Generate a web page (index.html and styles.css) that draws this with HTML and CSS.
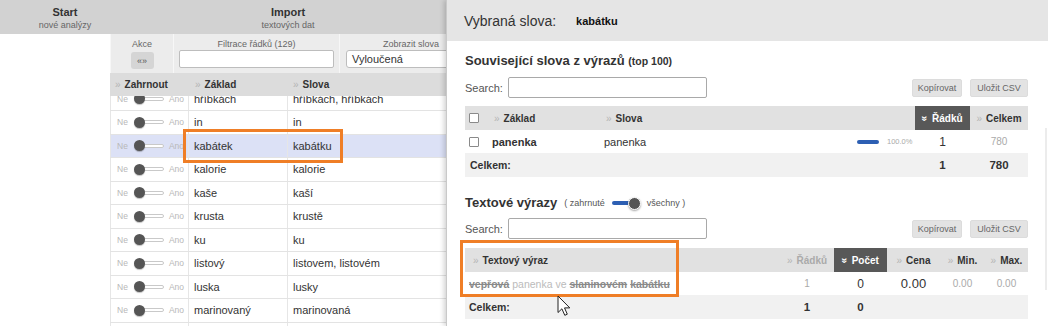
FILE: index.html
```html
<!DOCTYPE html>
<html lang="cs">
<head>
<meta charset="utf-8">
<title>Analýza slov</title>
<link rel="stylesheet" href="styles.css">
</head>
<body>
<div class="page">
  <nav class="topnav">
    <div class="nav-item nav-start"><b>Start</b><span>nové analýzy</span></div>
    <div class="nav-item nav-import"><b>Import</b><span>textových dat</span></div>
  </nav>
  <div class="main">
    <div class="gutter"></div>
    <section class="words">
      <div class="controls">
        <div class="ctl ctl-akce"><label>Akce</label><button class="btn-akce">«»</button></div>
        <div class="ctl ctl-filter"><label>Filtrace řádků (129)</label><div class="filter-input"></div></div>
        <div class="ctl ctl-show"><label>Zobrazit slova</label><div class="select">Vyloučená</div></div>
      </div>
      <div class="wt-head">
        <div class="c c-inc"><i class="ar">»</i>Zahrnout</div>
        <div class="c c-base"><i class="ar">»</i>Základ</div>
        <div class="c c-words"><i class="ar">»</i>Slova</div>
      </div>
      <div class="wt-body">
        <div class="wt-rows">
          <div class="row"><div class="c c-inc"><span class="ne">Ne</span><span class="sw"><span class="knob"></span><span class="track"></span></span><span class="ano">Ano</span></div><div class="c c-base">hříbkách</div><div class="c c-words">hříbkách, hříbkách</div></div>
          <div class="row"><div class="c c-inc"><span class="ne">Ne</span><span class="sw"><span class="knob"></span><span class="track"></span></span><span class="ano">Ano</span></div><div class="c c-base">in</div><div class="c c-words">in</div></div>
          <div class="row sel"><div class="c c-inc"><span class="ne">Ne</span><span class="sw"><span class="knob"></span><span class="track"></span></span><span class="ano">Ano</span></div><div class="c c-base">kabátek</div><div class="c c-words">kabátku</div></div>
          <div class="row"><div class="c c-inc"><span class="ne">Ne</span><span class="sw"><span class="knob"></span><span class="track"></span></span><span class="ano">Ano</span></div><div class="c c-base">kalorie</div><div class="c c-words">kalorie</div></div>
          <div class="row"><div class="c c-inc"><span class="ne">Ne</span><span class="sw"><span class="knob"></span><span class="track"></span></span><span class="ano">Ano</span></div><div class="c c-base">kaše</div><div class="c c-words">kaší</div></div>
          <div class="row"><div class="c c-inc"><span class="ne">Ne</span><span class="sw"><span class="knob"></span><span class="track"></span></span><span class="ano">Ano</span></div><div class="c c-base">krusta</div><div class="c c-words">krustě</div></div>
          <div class="row"><div class="c c-inc"><span class="ne">Ne</span><span class="sw"><span class="knob"></span><span class="track"></span></span><span class="ano">Ano</span></div><div class="c c-base">ku</div><div class="c c-words">ku</div></div>
          <div class="row"><div class="c c-inc"><span class="ne">Ne</span><span class="sw"><span class="knob"></span><span class="track"></span></span><span class="ano">Ano</span></div><div class="c c-base">listový</div><div class="c c-words">listovem, listovém</div></div>
          <div class="row"><div class="c c-inc"><span class="ne">Ne</span><span class="sw"><span class="knob"></span><span class="track"></span></span><span class="ano">Ano</span></div><div class="c c-base">luska</div><div class="c c-words">lusky</div></div>
          <div class="row"><div class="c c-inc"><span class="ne">Ne</span><span class="sw"><span class="knob"></span><span class="track"></span></span><span class="ano">Ano</span></div><div class="c c-base">marinovaný</div><div class="c c-words">marinovaná</div></div>
          <div class="row"><div class="c c-inc"><span class="ne">Ne</span><span class="sw"><span class="knob"></span><span class="track"></span></span><span class="ano">Ano</span></div><div class="c c-base">máslo</div><div class="c c-words">máslem</div></div>
        </div>
      </div>
    </section>
  </div>

  <aside class="detail">
    <div class="d-head"><span class="d-title">Vybraná slova:</span><b class="d-sel">kabátku</b></div>
    <div class="d-body">
      <h3 class="d-h">Související slova z výrazů <small>(top 100)</small></h3>
      <div class="search-row">
        <label class="s-label">Search:</label><div class="s-input"></div>
        <div class="btns"><button class="btn btn-copy">Kopírovat</button><button class="btn btn-csv">Uložit CSV</button></div>
      </div>
      <div class="dt dt1">
        <div class="dt-row dt-head">
          <div class="cell"><span class="cb"></span></div>
          <div class="cell pl7"><i class="ar">»</i>Základ</div>
          <div class="cell pl6"><i class="ar">»</i>Slova</div>
          <div class="cell sorted"><i class="ar ar-down">»</i>Řádků</div>
          <div class="cell center"><i class="ar">»</i>Celkem</div>
        </div>
        <div class="dt-row dt-data">
          <div class="cell"><span class="cb"></span></div>
          <div class="cell pl5"><b>panenka</b></div>
          <div class="cell pl4 words-cell"><span>panenka</span><span class="bar"></span><span class="pct">100.0%</span></div>
          <div class="cell center num">1</div>
          <div class="cell center num-light">780</div>
        </div>
        <div class="dt-row dt-total">
          <div class="cell span3 pl5">Celkem:</div>
          <div class="cell center num">1</div>
          <div class="cell center num">780</div>
        </div>
      </div>

      <h3 class="d-h d-h2">Textové výrazy <span class="mini">( zahrnuté <span class="sw2"><span class="track2"></span><span class="knob2"></span></span> všechny )</span></h3>
      <div class="search-row search-row2">
        <label class="s-label">Search:</label><div class="s-input"></div>
        <div class="btns"><button class="btn btn-copy">Kopírovat</button><button class="btn btn-csv">Uložit CSV</button></div>
      </div>
      <div class="dt dt2">
        <div class="dt-row dt-head">
          <div class="cell pl8"><i class="ar">»</i>Textový výraz</div>
          <div class="cell center muted-head"><i class="ar">»</i>Řádků</div>
          <div class="cell sorted"><i class="ar ar-down">»</i>Počet</div>
          <div class="cell center"><i class="ar">»</i>Cena</div>
          <div class="cell center"><i class="ar">»</i>Min.</div>
          <div class="cell center"><i class="ar">»</i>Max.</div>
        </div>
        <div class="dt-row dt-data">
          <div class="cell pl4 expr"><span><s class="struck">vepřová</s> <span class="faint">panenka ve</span> <s class="struck">slaninovém</s> <s class="struck">kabátku</s></span></div>
          <div class="cell center num-light">1</div>
          <div class="cell center num">0</div>
          <div class="cell center num big">0.00</div>
          <div class="cell center num-light">0.00</div>
          <div class="cell center num-light">0.00</div>
        </div>
        <div class="dt-row dt-total">
          <div class="cell pl4">Celkem:</div>
          <div class="cell center num">1</div>
          <div class="cell center num">0</div>
          <div class="cell"></div>
          <div class="cell"></div>
          <div class="cell"></div>
        </div>
      </div>
    </div>
    <div class="scrollthumb"></div>
  </aside>

  <div class="mark mark-left"></div>
  <div class="mark mark-right"></div>
  <svg class="cursor" width="15" height="22" viewBox="0 0 15 22"><path d="M1 1 L1 17.5 L4.9 13.8 L7.8 20.3 L10.3 19.2 L7.5 12.9 L12.8 12.9 Z" fill="#fff" stroke="#222" stroke-width="1" stroke-linejoin="round"/></svg>
</div>
</body>
</html>
```

FILE: styles.css
```css
* { box-sizing: border-box; margin: 0; padding: 0; }
html, body { width: 1048px; height: 326px; overflow: hidden; background: #fff; }
body { font-family: "Liberation Sans", Arial, sans-serif; color: #333; }
.page { position: relative; width: 1048px; height: 326px; overflow: hidden; }

/* top navigation */
.topnav { display: flex; height: 34px; background: #d2d2d2; }
.nav-item { display: flex; flex-direction: column; align-items: center; padding-top: 6px; line-height: 12px; }
.nav-start { width: 130px; }
.nav-import { width: 316px; }
.nav-item b { font-size: 11px; color: #333; }
.nav-item span { font-size: 9px; color: #666; margin-top: 1px; }

/* words panel */
.main { display: flex; }
.gutter { width: 110px; flex: none; }
.words { width: 371px; flex: none; }
.controls { display: grid; grid-template-columns: 63px 166px 1fr; height: 39px; background: #ececec; }
.ctl { display: flex; flex-direction: column; align-items: center; padding-top: 5px; border-left: 1px solid #f7f7f7; }
.ctl label { font-size: 9px; color: #666; line-height: 11px; }
.btn-akce { margin-top: 2px; width: 23px; height: 17px; background: #d5d5d5; border: none; border-radius: 3px; font-size: 9px; color: #555; font-family: inherit; }
.filter-input { width: 155px; height: 18px; background: #fff; border: 1px solid #bdbdbd; border-radius: 2px; }
.ctl-show { align-items: flex-start; }
.ctl-show label { align-self: center; }
.select { margin-left: 6px; width: 136px; height: 18px; background: #fff; border: 1px solid #bdbdbd; border-radius: 3px; font-size: 11px; line-height: 16px; padding-left: 5px; color: #333; }

.wt-head { display: grid; grid-template-columns: 78px 99px 1fr; height: 23px; background: #dcdcdc; font-size: 10px; font-weight: bold; align-items: center; color: #333; }
.wt-head .c-inc { padding-left: 5px; }
.wt-head .c-base { padding-left: 7px; }
.wt-head .c-words { padding-left: 6px; }
.ar { font-style: normal; font-weight: normal; color: #b5b5b5; margin-right: 4px; font-size: 10px; }

.wt-body { height: 230px; overflow: hidden; }
.wt-rows { margin-top: -8.5px; }
.row { display: grid; grid-template-columns: 78px 99px 1fr; height: 23.5px; border-bottom: 1px solid #e3e3e3; font-size: 11px; color: #333; }
.row.sel { background: #dce1f6; }
.row .c { display: flex; align-items: center; border-left: 1px solid #e6e6e6; }
.row .c-inc { padding-left: 6px; }
.row .c-base { padding-left: 5px; }
.row .c-words { padding-left: 5px; }
.ne, .ano { font-size: 8.5px; color: #b8b8b8; }
.sw { display: inline-flex; align-items: center; margin: 0 5px 0 6px; }
.knob { width: 11px; height: 11px; border-radius: 50%; background: #555; box-shadow: 0 1px 1px rgba(0,0,0,.25); position: relative; z-index: 1; }
.track { width: 21px; height: 4px; border: 1px solid #c9c9c9; border-radius: 2px; background: #fff; margin-left: -2px; }

/* detail panel (overlay) */
.detail { position: absolute; left: 446px; top: 0; width: 602px; height: 326px; background: #fff; border-left: 1px solid #c9c9c9; box-shadow: -2px 0 5px rgba(0,0,0,.18); }
.d-head { height: 41px; background: #e5e5e5; display: flex; align-items: center; padding-left: 17px; }
.d-title { font-size: 14px; color: #333; }
.d-sel { font-size: 11px; color: #111; margin-left: 20px; }
.d-body { padding: 0 20px 0 18px; }
.d-h { margin-top: 10px; height: 20px; line-height: 20px; font-size: 13px; font-weight: bold; color: #333; }
.d-h small { font-size: 10.5px; }
.d-h2 { margin-top: 16px; display: flex; align-items: center; }
.mini { display: inline-flex; align-items: center; font-size: 9px; font-weight: normal; color: #555; margin-left: 7px; }
.sw2 { display: inline-flex; align-items: center; margin: 0 6px 0 7px; }
.track2 { width: 19px; height: 4px; border-radius: 2px; background: #2d5fb3; }
.knob2 { width: 13px; height: 13px; border-radius: 50%; background: #555; border: 1px solid #fff; box-shadow: 0 1px 2px rgba(0,0,0,.35); margin-left: -3px; }

.search-row { display: flex; align-items: center; height: 21px; margin-top: 6px; }
.search-row2 { margin-top: 5px; }
.s-label { font-size: 11px; color: #555; }
.s-input { width: 199px; height: 21px; margin-left: 5px; border: 1px solid #a9a9a9; border-radius: 2px; background: #fff; }
.btns { margin-left: auto; display: flex; gap: 8px; }
.btn { height: 18px; background: #e3e3e3; border: 1px solid #dcdcdc; border-radius: 2px; font-family: inherit; font-size: 9px; color: #666; }
.btn-copy { width: 50px; }
.btn-csv { width: 58px; }

.dt { margin-top: 8px; font-size: 11px; }
.dt2 { margin-top: 9px; }
.dt-row { display: grid; height: 23px; }
.dt1 .dt-row { grid-template-columns: 22px 113px 315px 55px 58px; }
.dt2 .dt-row { grid-template-columns: 315px 54px 53px 53px 45px 43px; }
.dt-row .cell { display: flex; align-items: center; white-space: nowrap; }
.dt-head { height: 24px; background: #e1e1e1; font-size: 10px; font-weight: bold; color: #333; }
.dt-total { height: 24px; background: #f1f1f1; font-weight: bold; font-size: 10.5px; }
.sorted { background: #585858; color: #fff; justify-content: center; }
.ar-down { display: inline-block; transform: rotate(90deg); color: #fff; font-weight: bold; margin-right: 4px; }
.center { justify-content: center; }
.muted-head { color: #aaa; }
.pl4 { padding-left: 4px; }
.pl5 { padding-left: 5px; }
.pl6 { padding-left: 6px; }
.pl7 { padding-left: 7px; }
.pl8 { padding-left: 8px; }
.span3 { grid-column: 1 / 4; }
.cb { width: 10px; height: 10px; margin-left: 4px; border: 1px solid #8a8a8a; border-radius: 1px; background: #fff; }
.words-cell { padding-right: 0; }
.bar { margin-left: auto; width: 22px; height: 4px; border-radius: 2px; background: #2d5fb3; }
.pct { margin-left: 8px; width: 28px; font-size: 7.5px; color: #aaa; }
.num { font-size: 12px; color: #333; }
.num.big { font-size: 13px; }
.num-light { font-size: 10px; color: #aaa; }
.dt-total .num { font-weight: bold; font-size: 11.5px; }
.expr { font-size: 10.5px; }
.struck { text-decoration: line-through; color: #8a8a8a; font-weight: bold; }
.faint { color: #bbb; }
.scrollthumb { position: absolute; right: 1px; top: 128px; width: 2px; height: 162px; background: #ececec; }

/* annotation overlays */
.mark { position: absolute; border: 3px solid #ef7e26; }
.mark-left { left: 183px; top: 129px; width: 160px; height: 34px; }
.mark-right { left: 460px; top: 240px; width: 219px; height: 57px; }
.cursor { position: absolute; left: 557px; top: 295px; }
```
